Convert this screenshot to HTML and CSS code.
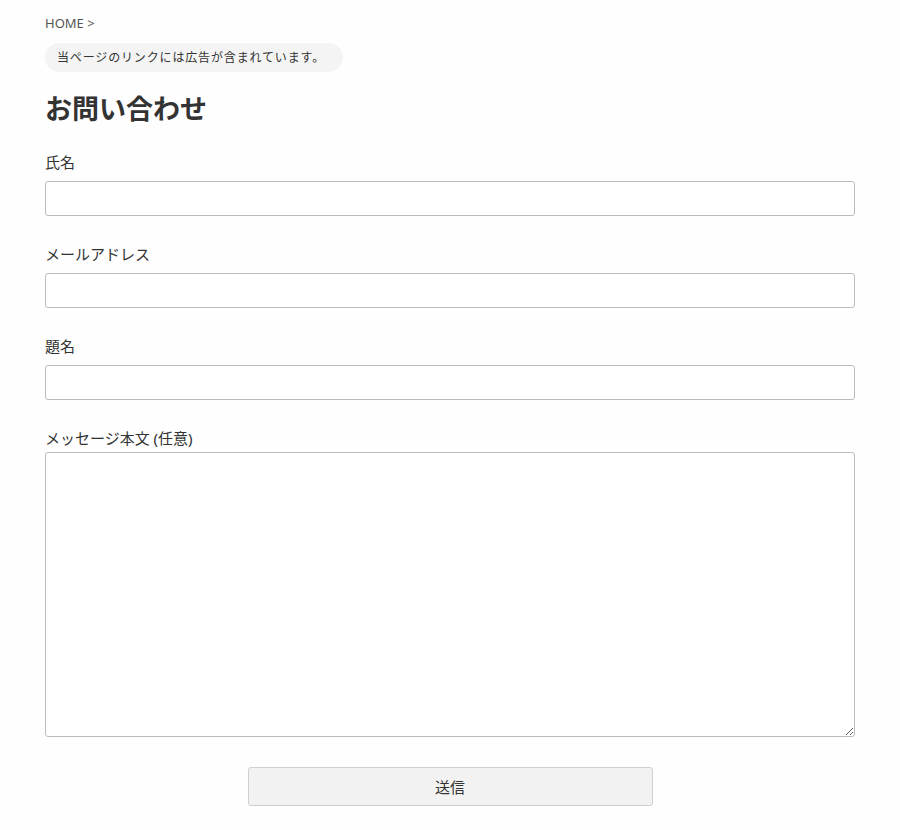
FILE: index.html
```html
<!DOCTYPE html>
<html lang="ja">
<head>
<meta charset="utf-8">
<title>お問い合わせ</title>
<link rel="stylesheet" href="styles.css">
</head>
<body>
<main class="page">
  <div class="breadcrumb">HOME &gt;</div>
  <div class="notice">当ページのリンクには広告が含まれています。</div>
  <h1 class="title">お問い合わせ</h1>
  <form class="form">
    <label class="field">
      <span class="label">氏名</span>
      <input class="input" type="text">
    </label>
    <label class="field">
      <span class="label">メールアドレス</span>
      <input class="input" type="email">
    </label>
    <label class="field">
      <span class="label">題名</span>
      <input class="input" type="text">
    </label>
    <label class="field field-last">
      <span class="label label-tight">メッセージ本文 (任意)</span>
      <textarea class="textarea"></textarea>
    </label>
    <div class="actions">
      <button class="submit" type="button">送信</button>
    </div>
  </form>
</main>
</body>
</html>
```
FILE: styles.css
```css
html, body {
  margin: 0;
  padding: 0;
  background: #fefefe;
}
body {
  font-family: "Noto Sans", "Noto Sans CJK JP", sans-serif;
  color: #333;
}
.page {
  width: 810px;
  margin: 0 0 0 45px;
  padding-top: 14px;
}
.breadcrumb {
  font-size: 13px;
  line-height: 18px;
  color: #555;
}
.notice {
  display: inline-block;
  margin-top: 11px;
  padding: 0 18px 0 12px;
  height: 29px;
  line-height: 29px;
  font-size: 12px;
  letter-spacing: 0.85px;
  color: #333;
  background: #f4f4f4;
  border-radius: 15px;
}
.title {
  margin: 18px 0 0;
  font-size: 27px;
  line-height: 36px;
  font-weight: 700;
  color: #333;
  font-family: "Noto Sans CJK JP", sans-serif;
}
.form {
  display: flex;
  flex-direction: column;
  margin-top: 25px;
}
.field {
  display: flex;
  flex-direction: column;
  margin-bottom: 27px;
}
.field-last {
  margin-bottom: 30px;
}
.label {
  font-size: 15px;
  line-height: 22px;
  color: #333;
  margin-bottom: 8px;
}
.label-tight {
  margin-bottom: 3px;
}
.input {
  box-sizing: border-box;
  width: 810px;
  height: 35px;
  margin: 0;
  border: 1px solid #bcbcbc;
  border-radius: 3px;
  background: #fff;
  font-size: 15px;
  padding: 4px 8px;
}
.textarea {
  box-sizing: border-box;
  width: 810px;
  height: 285px;
  margin: 0;
  border: 1px solid #bcbcbc;
  border-radius: 3px;
  background: #fff;
  font-size: 15px;
  padding: 6px 8px;
  resize: vertical;
  display: block;
}
.actions {
  display: flex;
  justify-content: center;
}
.submit {
  width: 405px;
  height: 39px;
  border: 1px solid #cfcfcf;
  border-radius: 3px;
  background: #f2f2f2;
  font-family: "Noto Sans CJK JP", sans-serif;
  font-size: 15px;
  color: #333;
}
```
